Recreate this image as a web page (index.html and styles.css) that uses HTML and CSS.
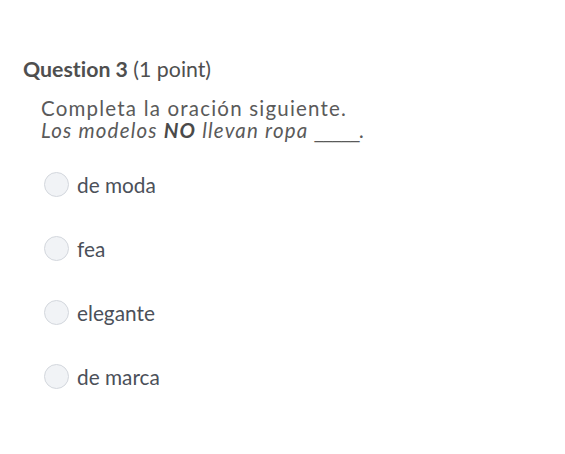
FILE: index.html
```html
<!DOCTYPE html>
<html lang="es">
<head>
<meta charset="utf-8">
<link rel="stylesheet" href="styles.css">
</head>
<body>
<div class="question">
  <h2 class="q-title"><strong>Question 3</strong> (1 point)</h2>
  <div class="q-text">
    <p>Completa la oración siguiente.</p>
    <p><em>Los modelos <strong>NO</strong> llevan ropa <span class="blank">_____</span>.</em></p>
  </div>
  <ul class="options">
    <li class="option"><span class="radio"></span><span class="label">de moda</span></li>
    <li class="option"><span class="radio"></span><span class="label">fea</span></li>
    <li class="option"><span class="radio"></span><span class="label">elegante</span></li>
    <li class="option"><span class="radio"></span><span class="label">de marca</span></li>
  </ul>
</div>
</body>
</html>
```
FILE: styles.css
```css
html, body {
  margin: 0;
  padding: 0;
  background: #ffffff;
}
body {
  font-family: Lato, "Open Sans", sans-serif;
  font-variant-ligatures: none;
}
.question {
  padding: 56px 0 0 23px;
}
.q-title {
  margin: 0;
  font-size: 21.3px;
  font-weight: 400;
  color: #4f4f4f;
  line-height: 27px;
}
.q-title strong {
  font-weight: 700;
}
.q-text {
  margin: 14px 0 0 18px;
  font-size: 20.5px;
  line-height: 22px;
  letter-spacing: 1.2px;
  color: #5a5a5a;
}
.q-text p {
  margin: 0;
}
.q-text strong {
  font-weight: 700;
  color: #4a4a4a;
}
.blank {
  letter-spacing: 0;
  font-family: "DejaVu Sans", sans-serif;
  font-style: normal;
  font-size: 18px;
}
.options {
  list-style: none;
  margin: 29px 0 0 21px;
  padding: 0;
  display: flex;
  flex-direction: column;
  gap: 39px;
}
.option {
  display: flex;
  align-items: center;
  gap: 8px;
  height: 25px;
}
.radio {
  width: 23px;
  height: 23px;
  border-radius: 50%;
  border: 1px solid #d3d7dd;
  background: #f1f3f6;
  flex: none;
}
.label {
  font-size: 20.8px;
  color: #4b5059;
}
```
